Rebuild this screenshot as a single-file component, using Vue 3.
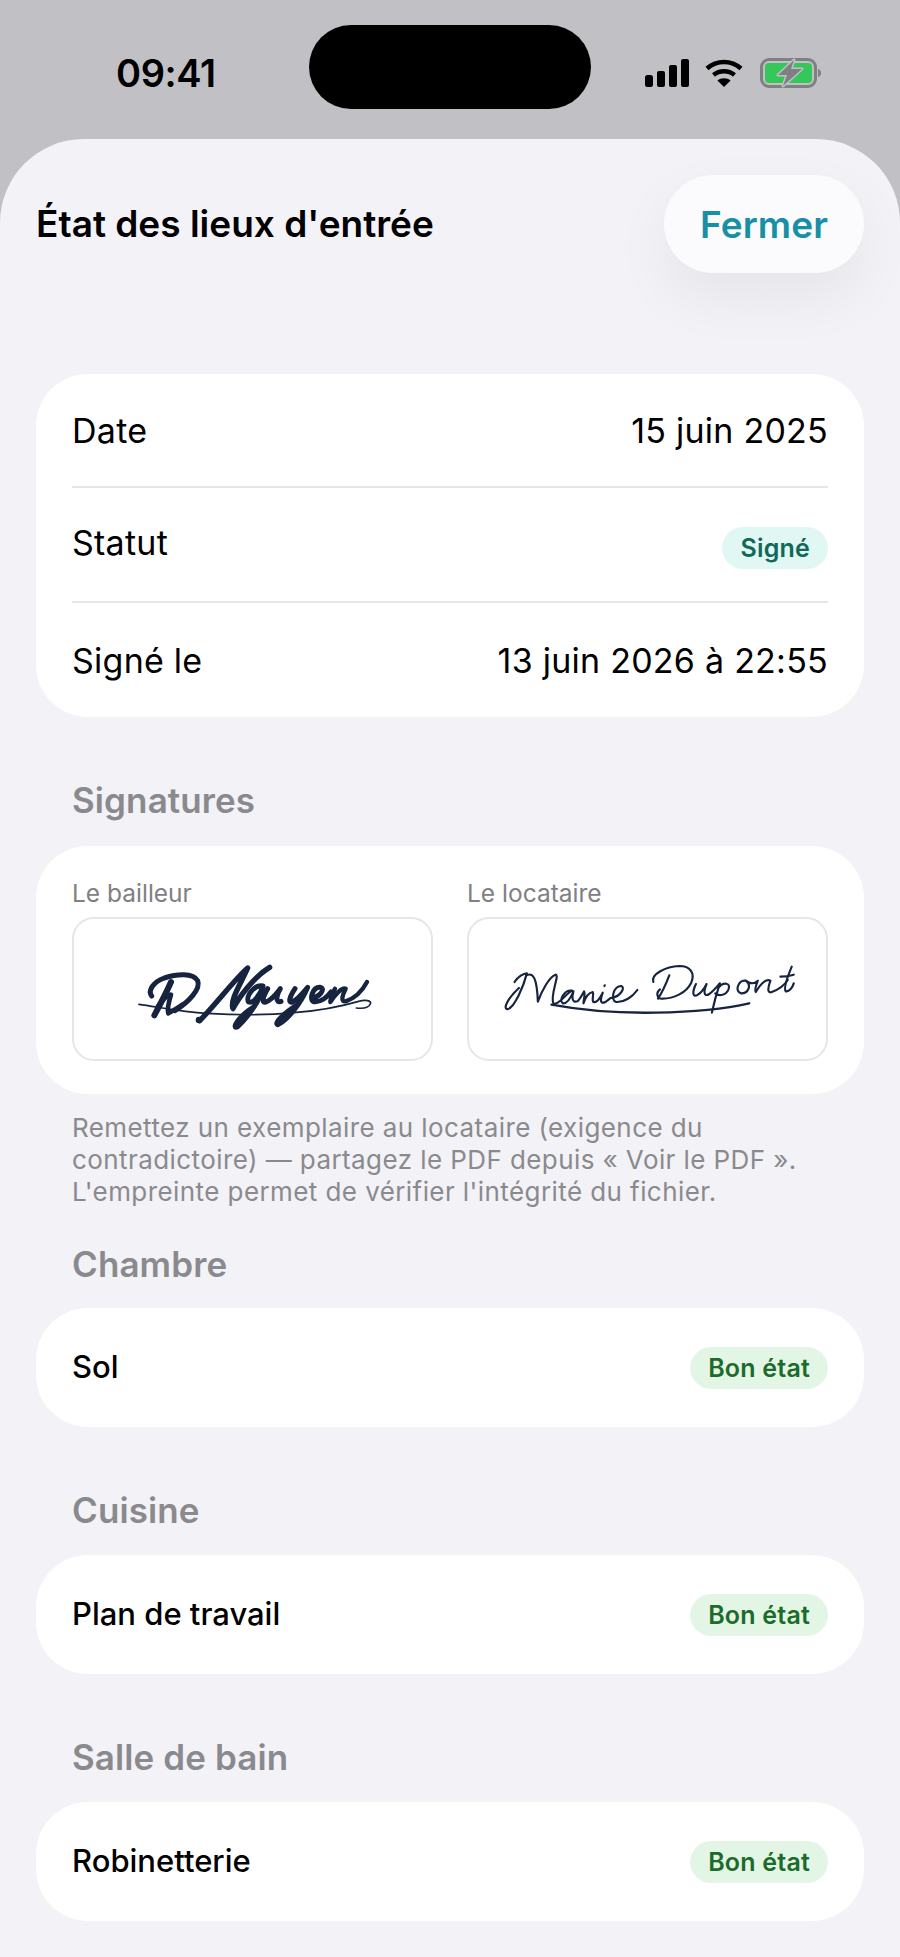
<script setup>
const infoRows = [
  { label: 'Date', value: '15 juin 2025' },
  { label: 'Statut', badge: 'Signé' },
  { label: 'Signé le', value: '13 juin 2026 à 22:55' },
]
const rooms = [
  { name: 'Chambre', item: 'Sol' },
  { name: 'Cuisine', item: 'Plan de travail' },
  { name: 'Salle de bain', item: 'Robinetterie' },
]
</script>

<template>
  <div class="page">
    <header class="status">
      <span class="time">09:41</span>
      <span class="island"></span>
      <span class="status-icons">
        <svg class="signal" viewBox="0 0 44 28" width="44" height="28" fill="#000">
          <rect x="0" y="16" width="8" height="12" rx="2.5" />
          <rect x="12" y="12" width="8" height="16" rx="2" />
          <rect x="24" y="6" width="8" height="22" rx="2" />
          <rect x="36" y="0" width="8" height="28" rx="2" />
        </svg>
        <svg class="wifi" viewBox="0 0 38 28" width="38" height="28" fill="none" stroke="#000" stroke-width="4.6">
          <path d="M2 9.5C12 .8 26 .8 36 9.5" />
          <path d="M8.5 16C14.5 11 23.5 11 29.500 16" />
          <path d="M19 28l-6.6-6.600c3.600-3 9.600-3 13.200 0z" fill="#000" stroke="none" />
        </svg>
        <svg class="battery" viewBox="0 0 62 30" width="62" height="30">
          <rect x="1.500" y="1.500" width="54" height="27" rx="7.500" fill="none" stroke="#808084" stroke-width="3" />
          <rect x="5" y="5" width="47" height="20" rx="4" fill="#34c759" />
          <path d="M58 11c2 .5 3 2 3 4s-1 3.500-3 4z" fill="#808084" />
          <path class="bolt" d="M34 2L18 17h9l-4 11 19-17H31z" />
        </svg>
      </span>
    </header>

    <main class="sheet">
      <div class="sheet-head">
        <h1 class="title">État des lieux d'entrée</h1>
        <button class="close">Fermer</button>
      </div>

      <section class="card info">
        <div v-for="row in infoRows" :key="row.label" class="row" :class="{ 'row-badge': row.badge }">
          <span class="row-label">{{ row.label }}</span>
          <span v-if="row.value" class="row-value">{{ row.value }}</span>
          <span v-else class="pill pill-teal">{{ row.badge }}</span>
        </div>
      </section>

      <h2 class="heading heading-first">Signatures</h2>
      <section class="card signatures">
        <div class="sig">
          <div class="sig-label">Le bailleur</div>
          <div class="sig-box">
            <svg viewBox="95 172 1083 430" fill="none" stroke="#16243f" stroke-linecap="round" stroke-linejoin="round">
              <g stroke-width="15">
                <path d="M334 408C322 392 338 366 372 354C410 342 458 338 472 362C482 386 446 426 404 452" stroke-width="15" />
                <path d="M392 366C378 398 358 436 342 466" stroke-width="18" />
                <path d="M352 440C366 418 386 402 392 404C386 424 380 450 384 460C398 452 412 444 426 434" stroke-width="14" />
                <path d="M478 482C520 440 590 350 622 324C602 370 568 420 578 446C592 418 640 350 688 322" stroke-width="16" />
                <path d="M668 378C642 372 614 410 625 426C640 432 660 402 668 380C660 422 622 472 592 500C572 510 592 470 642 440" />
                <path d="M682 386C668 410 662 430 676 426C696 420 710 398 720 386C706 410 706 430 722 424" />
                <path d="M764 386C748 410 742 430 756 426C776 416 790 396 802 382C782 430 742 480 712 494C700 490 730 460 772 434" />
                <path d="M814 414C840 410 856 386 840 382C816 380 806 420 820 425C840 428 860 412 872 396" />
                <path d="M884 386C874 408 868 420 870 426C886 402 906 380 916 386C906 406 900 426 916 424C940 416 964 396 980 366" stroke-width="13" />
              </g>
              <path d="M296 433C350 440 420 456 500 460C580 465 680 466 760 458C840 452 900 440 955 424C975 418 995 422 990 432C985 444 965 446 948 444" stroke-width="5" />
              <circle cx="476" cy="480" r="10" fill="#16243f" stroke="none" />
            </svg>
          </div>
        </div>
        <div class="sig">
          <div class="sig-label">Le locataire</div>
          <div class="sig-box">
            <svg viewBox="52 172 1085 430" fill="none" stroke="#16243f" stroke-linecap="round" stroke-linejoin="round">
              <g stroke-width="6.500">
                <path d="M195 366C205 350 222 340 232 340C222 378 196 442 174 448C158 446 176 414 208 384" />
                <path d="M232 345C250 338 262 350 265 425C278 390 300 350 318 344C332 345 300 405 312 432C330 434 345 404 368 392C346 388 326 420 340 430C356 432 366 408 372 394C366 412 368 430 384 424C392 418 398 404 404 394C408 404 402 420 402 430C408 412 418 398 430 396C434 404 426 420 432 426C442 430 452 414 460 398C454 414 450 430 464 428C470 426 476 420 484 414C510 412 530 384 516 378C492 378 482 420 500 426C524 428 550 410 564 390" />
                <path d="M466 376L465 378" />
                <path d="M612 366C604 342 650 320 690 318C724 318 738 340 726 368C710 400 672 416 640 416C624 418 618 400 632 388M660 346C650 372 638 398 626 416" />
                <path d="M740 372C728 398 730 414 746 404C756 398 766 384 772 372C762 396 764 412 780 402C792 394 800 384 810 372" />
                <path d="M812 370C802 400 794 430 788 458M806 385C822 364 846 368 838 388C830 406 810 410 798 400" />
                <path d="M888 362C866 360 856 396 876 400C898 400 908 376 890 362C902 372 916 372 926 362C920 378 916 392 920 396C932 376 950 354 964 362C958 378 952 402 968 396C990 388 1006 376 1016 360" />
                <path d="M1028 320C1018 344 1002 384 1010 394C1020 396 1030 384 1034 370M994 350C1006 350 1022 348 1034 344" />
              </g>
              <path d="M306 434C380 448 500 460 620 458C720 456 820 448 900 430" stroke-width="7" />
            </svg>
          </div>
        </div>
      </section>

      <p class="note">Remettez un exemplaire au locataire (exigence du<br />contradictoire) — partagez le PDF depuis « Voir le PDF ».<br />L'empreinte permet de vérifier l'intégrité du fichier.</p>

      <div v-for="(room, i) in rooms" :key="room.name" class="room" :class="{ 'room-first': i === 0 }">
        <h2 class="heading">{{ room.name }}</h2>
        <section class="card item">
          <span class="item-name">{{ room.item }}</span>
          <span class="pill pill-green">Bon état</span>
        </section>
      </div>
    </main>
  </div>
</template>

<style>
html, body { margin: 0; background: #c1c0c5; }
</style>

<style scoped>
.page {
  width: 900px;
  height: 1957px;
  overflow: hidden;
  background: #c1c0c5;
  font-family: Inter, "Noto Sans", sans-serif;
  color: #000;
}
.status {
  height: 139px;
  display: flex;
  box-sizing: border-box;
  padding-top: 25px;
}
.time {
  width: 193px;
  padding-left: 116px;
  margin-top: 26px;
  flex: none;
  font-size: 38px;
  line-height: 44px;
  font-weight: 600;
  letter-spacing: -0.4px;
  color: #000;
}
.island {
  width: 282px;
  height: 84px;
  border-radius: 42px;
  background: #000;
  flex: none;
}
.status-icons {
  display: flex;
  align-items: flex-start;
  margin-left: 54px;
  margin-top: 33px;
}
.signal { margin-top: 1px; }
.wifi { margin-left: 16px; margin-top: 1px; }
.battery { margin-left: 17px; }
.bolt {
  fill: #808084;
  stroke: #c1c0c5;
  stroke-width: 3;
  stroke-linejoin: round;
  paint-order: stroke;
}

.sheet {
  height: 1818px;
  box-sizing: border-box;
  padding: 36px 36px 0;
  background: #f2f2f7;
  border-radius: 84px 84px 0 0;
}
.sheet-head {
  height: 98px;
  display: flex;
  align-items: center;
  justify-content: space-between;
  margin-bottom: 101px;
}
.title {
  margin: 0;
  font-size: 37px;
  font-weight: 600;
  line-height: 44px;
}
.close {
  width: 200px;
  height: 98px;
  border: 0;
  border-radius: 49px;
  background: #fbfbfe;
  color: #178fa5;
  font-family: inherit;
  font-size: 37px;
  font-weight: 600;
  letter-spacing: 0.1px;
  padding: 0;
  box-shadow: 0 24px 60px rgba(0, 0, 0, 0.06);
}
.card {
  background: #fff;
  border-radius: 52px;
}
.info {
  padding: 0 36px;
  height: 343px;
}
.row {
  height: 112px;
  box-sizing: border-box;
  display: flex;
  align-items: center;
  justify-content: space-between;
}
.row + .row {
  border-top: 2px solid #e6e6ea;
  height: 115px;
}
.row + .row + .row { height: 116px; }
.row-badge { padding-bottom: 4px; }
.row-label, .row-value {
  font-size: 34px;
  font-weight: 400;
  letter-spacing: 0.25px;
}
.pill {
  height: 42px;
  line-height: 42px;
  border-radius: 21px;
  padding: 0 18px;
  font-size: 25px;
  font-weight: 600;
  letter-spacing: 0.2px;
  box-sizing: border-box;
}
.pill-teal {
  margin-top: 11px;
  background: #e0f7f3;
  color: #11695a;
}
.pill-green {
  background: #e3f6e6;
  color: #1b6b2b;
}
.heading {
  margin: 0 0 25px;
  padding-left: 36px;
  font-size: 35px;
  line-height: 40px;
  font-weight: 600;
  letter-spacing: 0.1px;
  color: #8a8a8e;
}
.heading-first {
  margin-top: 63px;
  margin-bottom: 26px;
}
.signatures {
  display: flex;
  gap: 34px;
  padding: 32px 36px 33px;
  height: 248px;
  box-sizing: border-box;
}
.sig { width: 361px; flex: none; }
.sig-label {
  font-size: 24.500px;
  line-height: 30px;
  color: #808084;
  margin-bottom: 9px;
}
.sig-box {
  height: 144px;
  box-sizing: border-box;
  border: 2px solid #e6e6ea;
  border-radius: 22px;
  overflow: hidden;
}
.sig-box svg {
  display: block;
  width: 361px;
  height: 144px;
  margin: -2px;
}
.note {
  margin: 18px 0 0;
  padding-left: 36px;
  font-size: 26px;
  line-height: 32px;
  letter-spacing: 0.42px;
  color: #8a8a8e;
}
.room { margin-top: 63px; }
.room .heading { margin-bottom: 25px; }
.room-first { margin-top: 36px; }
.room-first .heading { margin-bottom: 24px; }
.item {
  height: 119px;
  padding: 0 36px;
  display: flex;
  align-items: center;
  justify-content: space-between;
}
.item-name {
  font-size: 31px;
  line-height: 36px;
  margin-bottom: 2px;
  font-weight: 500;
}
</style>
